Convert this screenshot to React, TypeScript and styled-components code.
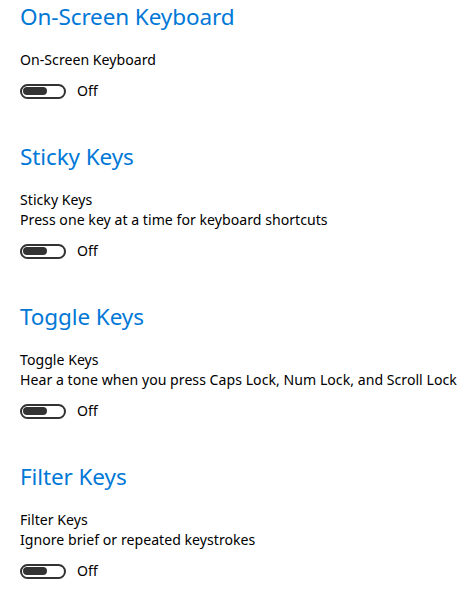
import React from 'react';
import styled, { createGlobalStyle } from 'styled-components';

const GlobalStyle = createGlobalStyle`
  body {
    margin: 0;
    background: #ffffff;
    font-family: "Segoe UI", "Noto Sans", "Open Sans", sans-serif;
    color: #000000;
  }
`;

const Page = styled.div`
  display: flex;
  flex-direction: column;
  padding: 0 20px;
  width: 459px;
  box-sizing: border-box;
`;

const Section = styled.section`
  display: flex;
  flex-direction: column;
  margin-bottom: 39px;
`;

const Heading = styled.h2`
  margin: 0;
  font-size: 22.5px;
  font-weight: 400;
  line-height: 34px;
  color: #0078d7;
  letter-spacing: -0.1px;
`;

const Labels = styled.div`
  display: flex;
  flex-direction: column;
  margin-top: 16px;
`;

const Line = styled.div`
  font-size: 14.1px;
  line-height: 20px;
  letter-spacing: 0.03px;
  white-space: nowrap;
`;

const ToggleRow = styled.div`
  display: flex;
  align-items: center;
  height: 20px;
  margin-top: 11px;
`;

const Track = styled.div`
  width: 46px;
  height: 15px;
  box-sizing: border-box;
  border: 2px solid #333333;
  border-radius: 8px;
  display: flex;
  align-items: center;
  padding: 0 1px;
`;

const Knob = styled.div`
  width: 24px;
  height: 8px;
  border-radius: 4px;
  background: #333333;
`;

const State = styled.span`
  margin-left: 11px;
  font-size: 14.1px;
  line-height: 20px;
`;

interface Setting {
  title: string;
  label: string;
  description?: string;
}

const settings: Setting[] = [
  { title: 'On-Screen Keyboard', label: 'On-Screen Keyboard' },
  { title: 'Sticky Keys', label: 'Sticky Keys', description: 'Press one key at a time for keyboard shortcuts' },
  { title: 'Toggle Keys', label: 'Toggle Keys', description: 'Hear a tone when you press Caps Lock, Num Lock, and Scroll Lock' },
  { title: 'Filter Keys', label: 'Filter Keys', description: 'Ignore brief or repeated keystrokes' },
];

const App: React.FC = () => (
  <>
    <GlobalStyle />
    <Page>
      {settings.map((s) => (
        <Section key={s.title}>
          <Heading>{s.title}</Heading>
          <Labels>
            <Line>{s.label}</Line>
            {s.description && <Line>{s.description}</Line>}
          </Labels>
          <ToggleRow>
            <Track>
              <Knob />
            </Track>
            <State>Off</State>
          </ToggleRow>
        </Section>
      ))}
    </Page>
  </>
);

export default App;
